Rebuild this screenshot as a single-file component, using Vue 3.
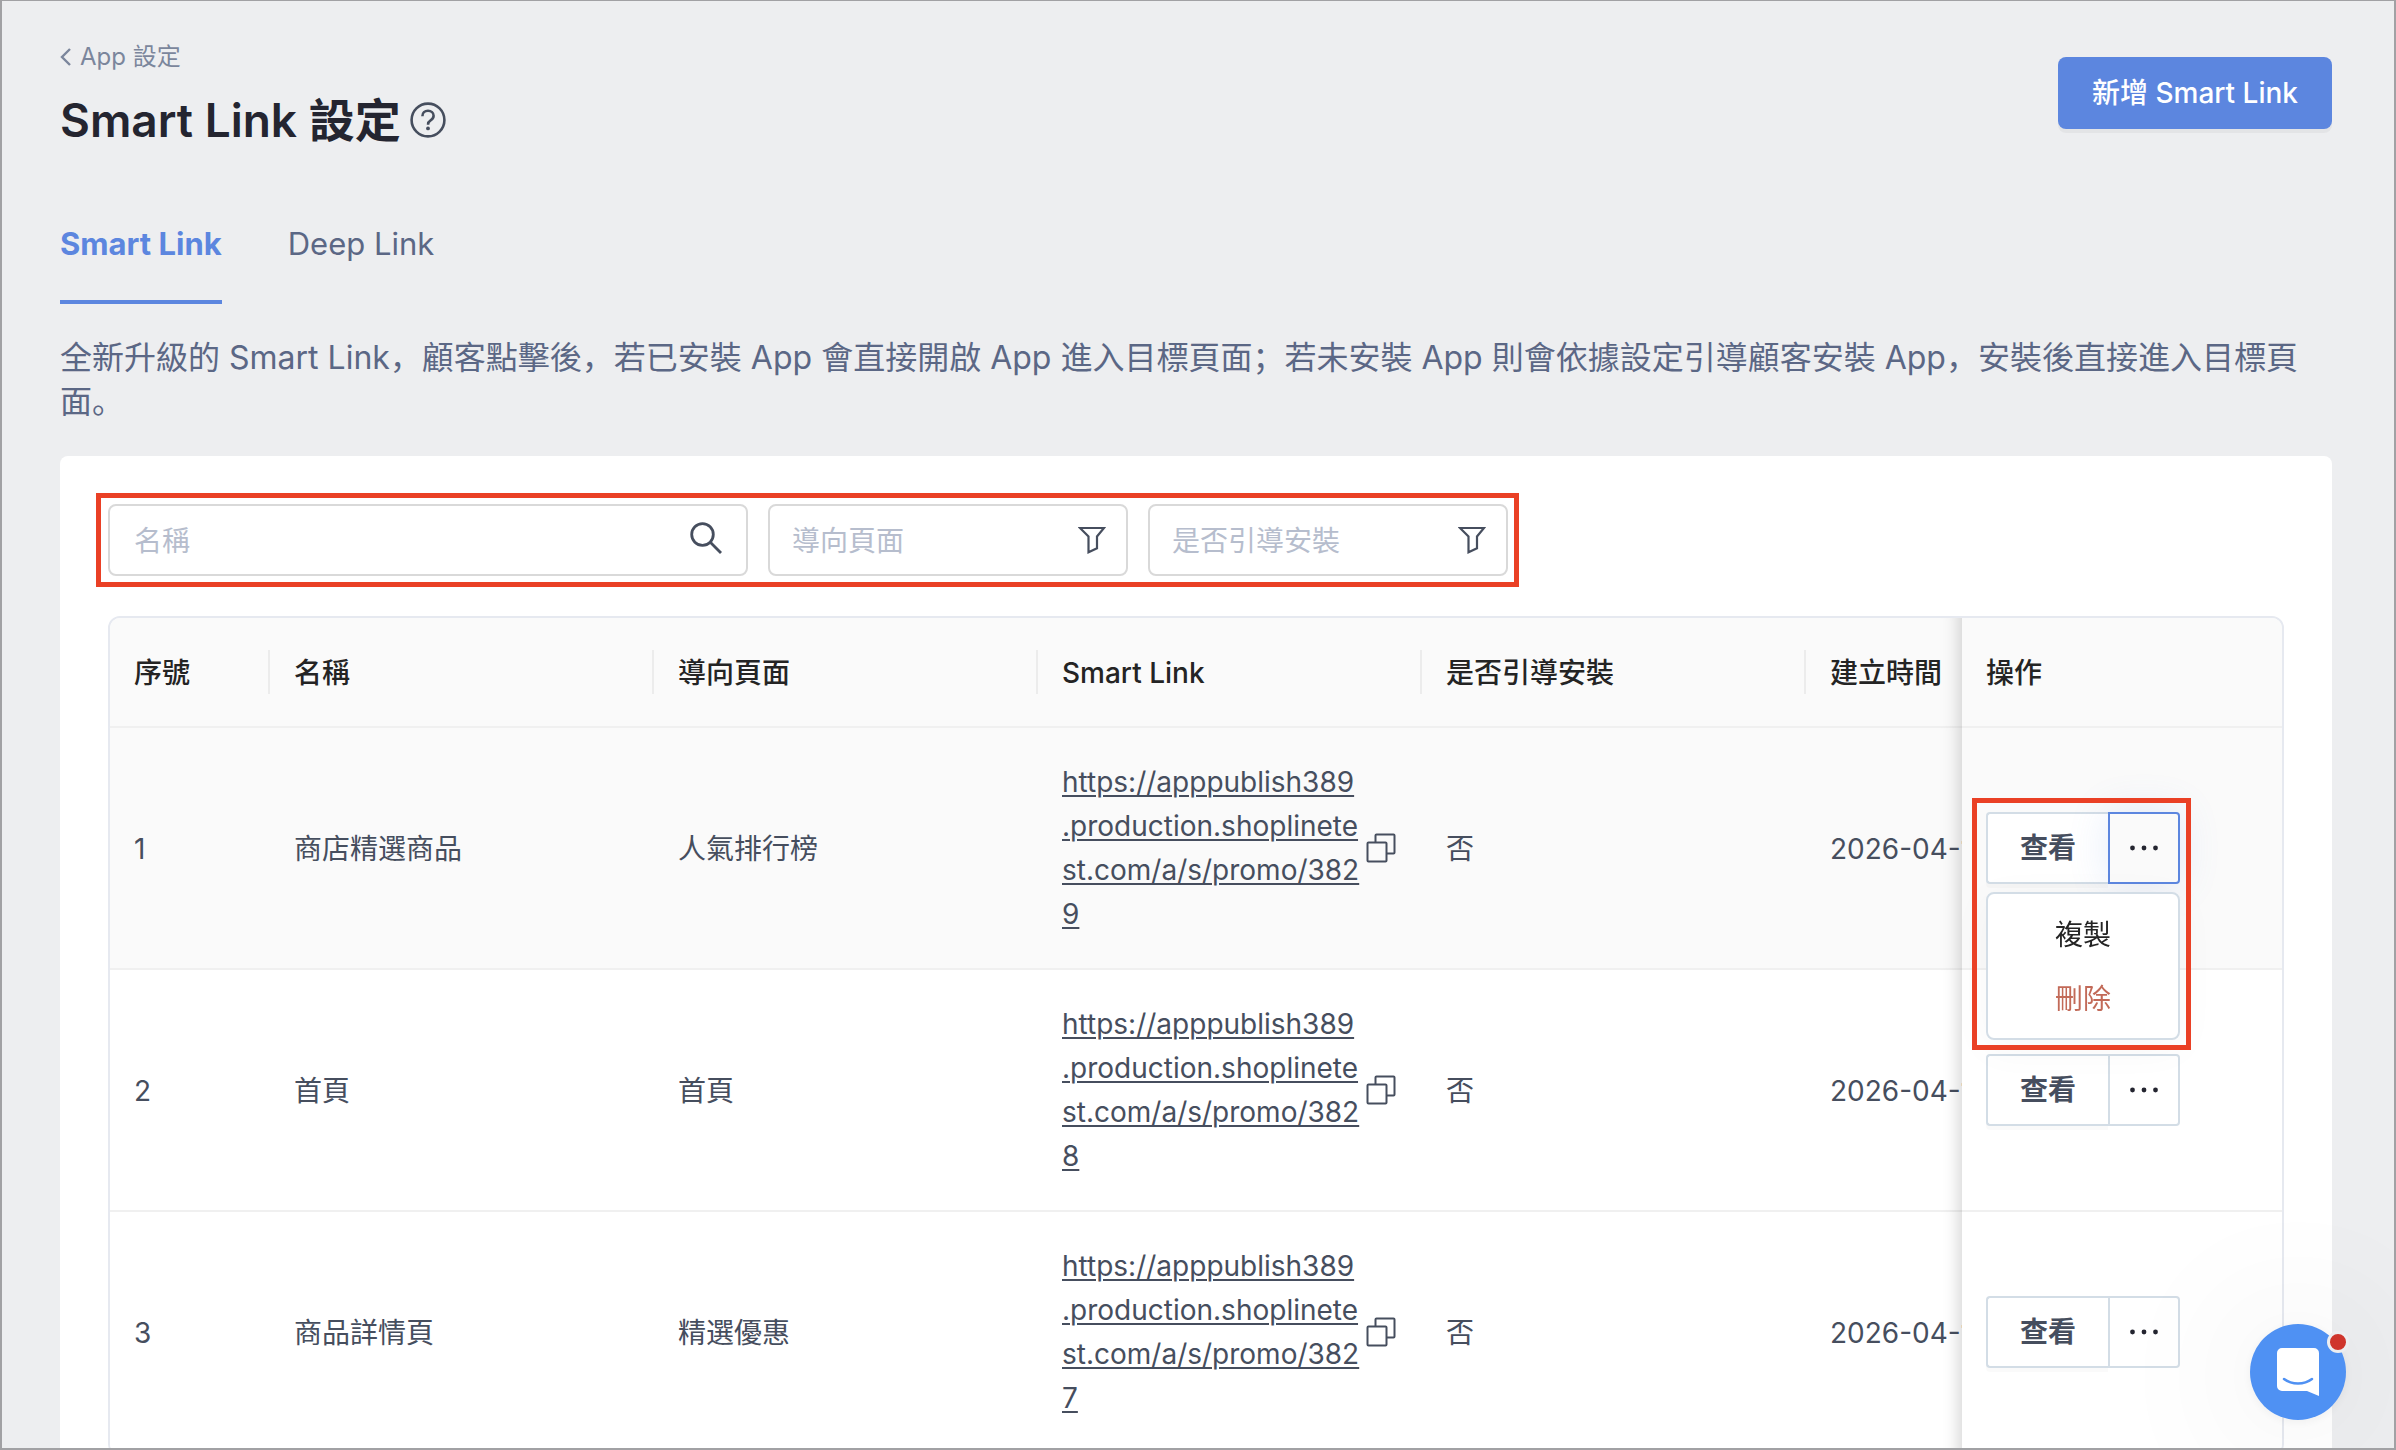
<script setup>
import { ref } from 'vue'

const tabs = ['Smart Link', 'Deep Link']
const activeTab = ref('Smart Link')
const keyword = ref('')
const openMenu = ref(1)

const columns = ['序號', '名稱', '導向頁面', 'Smart Link', '是否引導安裝', '建立時間']

const rows = [
  { id: 1, name: '商店精選商品', target: '人氣排行榜', code: '3829', guide: '否', created: '2026-04-10' },
  { id: 2, name: '首頁', target: '首頁', code: '3828', guide: '否', created: '2026-04-10' },
  { id: 3, name: '商品詳情頁', target: '精選優惠', code: '3827', guide: '否', created: '2026-04-10' },
]

const shop = 'https://apppublish389'
const pathOf = (row) => `.production.shoplinetest.com/a/s/promo/${row.code}`
const toggleMenu = (id) => {
  openMenu.value = openMenu.value === id ? null : id
}
</script>

<template>
  <div class="page">
    <header class="page-header">
      <div>
        <a class="breadcrumb" href="#">
          <svg width="12" height="20" viewBox="0 0 12 20" fill="none" stroke="currentColor" stroke-width="2.4">
            <path d="M10 2 2 10l8 8" />
          </svg>
          App 設定
        </a>
        <h1 class="title">
          Smart Link 設定
          <svg width="36" height="36" viewBox="0 0 36 36" fill="none" stroke="#464e5e" stroke-width="2.6">
            <circle cx="18" cy="18" r="16.4" />
            <path d="M12.4 14.2c0-3.2 2.4-5.4 5.6-5.4s5.6 2 5.6 5c0 2.2-1.3 3.5-3 4.5-1.9 1.2-2.5 2-2.5 4v.5" />
            <circle cx="18" cy="26.4" r="1.9" fill="#464e5e" stroke="none" />
          </svg>
        </h1>
      </div>
      <button class="primary" type="button">新增 Smart Link</button>
    </header>

    <nav class="tabs">
      <button
        v-for="tab in tabs"
        :key="tab"
        type="button"
        class="tab"
        :class="{ active: tab === activeTab }"
        @click="activeTab = tab"
      >{{ tab }}</button>
    </nav>

    <p class="intro">全新升級的 Smart Link，顧客點擊後，若已安裝 App 會直接開啟 App 進入目標頁面；若未安裝 App 則會依據設定引導顧客安裝 App，安裝後直接進入目標頁面。</p>

    <main class="card">
      <form class="filters" @submit.prevent>
        <div class="field search">
          <input v-model="keyword" type="text" placeholder="名稱" aria-label="名稱" />
          <svg class="field-icon" width="32" height="32" viewBox="0 0 32 32" fill="none" stroke="#464e5e" stroke-width="2.8">
            <circle cx="12.5" cy="12.5" r="10.8" />
            <path d="M20.3 20.3 31 31" />
          </svg>
        </div>
        <div v-for="label in ['導向頁面', '是否引導安裝']" :key="label" class="field">
          <select :aria-label="label">
            <option>{{ label }}</option>
          </select>
          <svg class="field-icon" width="28" height="28" viewBox="0 0 28 28" fill="none" stroke="#464e5e" stroke-width="2.2">
            <path d="M2 2h24l-7 8.5v11.8l-8.5 4V10.5z" />
          </svg>
        </div>
        <span class="callout filters-callout"></span>
      </form>

      <div class="table-wrap">
        <table>
          <colgroup>
            <col class="col-index" />
            <col v-for="n in 5" :key="n" class="col-data" />
            <col class="col-action" />
          </colgroup>
          <thead>
            <tr>
              <th v-for="name in columns" :key="name" scope="col">{{ name }}</th>
              <th class="fixed" scope="col">操作</th>
            </tr>
          </thead>
          <tbody>
            <tr v-for="row in rows" :key="row.id" :class="{ hovered: openMenu === row.id }">
              <td>{{ row.id }}</td>
              <td>{{ row.name }}</td>
              <td>{{ row.target }}</td>
              <td class="control">
                <div class="link-cell">
                  <a :href="shop + pathOf(row)">{{ shop }}<wbr />{{ pathOf(row) }}</a>
                  <button class="copy" type="button" aria-label="複製連結">
                    <svg width="30" height="30" viewBox="0 0 30 30" fill="none" stroke="currentColor" stroke-width="2">
                      <rect x="1.5" y="9.5" width="19" height="19" rx="1" />
                      <path d="M9.5 9.5v-7a1 1 0 0 1 1-1h17a1 1 0 0 1 1 1v17a1 1 0 0 1-1 1h-7" />
                    </svg>
                  </button>
                </div>
              </td>
              <td>{{ row.guide }}</td>
              <td>{{ row.created }}</td>
              <td class="control fixed" :class="{ open: openMenu === row.id }">
                <div class="actions">
                  <button class="view" type="button">查看</button>
                  <button
                    class="more"
                    :class="{ active: openMenu === row.id }"
                    type="button"
                    aria-label="更多"
                    @click="toggleMenu(row.id)"
                  >
                    <svg width="28" height="6" viewBox="0 0 28 6" fill="#242530">
                      <circle cx="2.5" cy="3" r="2.4" />
                      <circle cx="14" cy="3" r="2.4" />
                      <circle cx="25.5" cy="3" r="2.4" />
                    </svg>
                  </button>
                  <div v-if="openMenu === row.id" class="menu">
                    <button type="button">複製</button>
                    <button class="danger" type="button">刪除</button>
                  </div>
                  <span v-if="openMenu === row.id" class="callout menu-callout"></span>
                </div>
              </td>
            </tr>
          </tbody>
        </table>
      </div>
    </main>

    <button class="chat" type="button" aria-label="客服">
      <svg width="42" height="48" viewBox="0 0 42 48">
        <path d="M5 0h32a5 5 0 0 1 5 5v43l-12-5H5a5 5 0 0 1-5-5V5a5 5 0 0 1 5-5z" fill="#fff" />
        <path d="M7 31c8 6 20 6 28 0" fill="none" stroke="#4f91f3" stroke-width="2.6" stroke-linecap="round" />
      </svg>
      <span class="badge"></span>
    </button>
  </div>
</template>

<style>
body {
  margin: 0;
  background: #edeef0;
}
</style>

<style scoped>
.page {
  box-sizing: border-box;
  height: 100vh;
  overflow: hidden;
  padding: 39px 64px 0 60px;
  background: #edeef0;
  color: #464e5e;
  font-family: Inter, "Noto Sans CJK SC", sans-serif;
  font-size: 28px;
  line-height: 44px;
}

.page::after {
  content: "";
  position: fixed;
  inset: 0;
  z-index: 20;
  border: 2px solid #a1a1a4;
  border-top-width: 1px;
  pointer-events: none;
}

button,
input,
select {
  box-sizing: border-box;
  margin: 0;
  font: inherit;
  cursor: pointer;
}

.page-header {
  display: flex;
  justify-content: space-between;
  align-items: flex-start;
}

.breadcrumb {
  display: flex;
  align-items: center;
  gap: 8px;
  color: #7b869c;
  font-size: 24px;
  line-height: 36px;
  text-decoration: none;
}

.title {
  display: flex;
  align-items: center;
  gap: 9px;
  margin: 13px 0 0;
  color: #242530;
  font-size: 46px;
  font-weight: 600;
  line-height: 64px;
}

.primary {
  height: 72px;
  margin-top: 18px;
  padding: 0 34px;
  border: 0;
  border-radius: 8px;
  background: #5c86df;
  box-shadow: 0 4px 0 rgba(0, 0, 0, 0.04);
  color: #fff;
  font-weight: 500;
}

.tabs {
  display: flex;
  gap: 66px;
  margin-top: 68px;
}

.tab {
  padding: 0 0 32px;
  border: 0;
  border-bottom: 4px solid transparent;
  background: none;
  color: #5b6785;
  font-size: 31px;
  line-height: 48px;
}

.tab.active {
  border-color: #5c86df;
  color: #5c86df;
  font-weight: 700;
}

.intro {
  margin: 32px 0;
  color: #5b6785;
  font-size: 32px;
  line-height: 44px;
}

.card {
  padding: 48px;
  border-radius: 8px;
  background: #fff;
}

.filters {
  position: relative;
  display: flex;
  gap: 20px;
  width: fit-content;
}

.field {
  position: relative;
  width: 360px;
}

.field.search {
  width: 640px;
}

.field input,
.field select {
  display: block;
  width: 100%;
  height: 72px;
  padding: 2px 72px 0 24px;
  appearance: none;
  border: 2px solid #d9d9d9;
  border-radius: 8px;
  outline: none;
  background: #fff;
  color: #b6bdcd;
}

.field select {
  padding-left: 22px;
}

.field input::placeholder {
  color: #b6bdcd;
  opacity: 1;
}

.field-icon {
  position: absolute;
  top: 22px;
  right: 22px;
  pointer-events: none;
}

.search .field-icon {
  top: 18px;
  right: 26px;
}

.callout {
  position: absolute;
  border: 5px solid #ea4025;
  pointer-events: none;
}

.filters-callout {
  inset: -11px -11px -11px -12px;
}

.table-wrap {
  margin-top: 40px;
  overflow-x: auto;
  scrollbar-width: none;
  border: 2px solid #e6e9f0;
  border-radius: 12px;
}

table {
  width: 100%;
  min-width: 2400px;
  table-layout: fixed;
  border-collapse: separate;
  border-spacing: 0;
}

.col-index {
  width: 160px;
}

.col-data {
  width: 384px;
}

.col-action {
  width: 320px;
}

th,
td {
  position: relative;
  padding: 33px 24px 31px;
  border-bottom: 2px solid #f0f0f0;
  background: #fff;
  text-align: left;
}

.control {
  padding: 32px 24px;
}

th {
  background: #fafafa;
  color: #242424;
  font-weight: 500;
}

th:not(.fixed)::after {
  content: "";
  position: absolute;
  top: 32px;
  right: 0;
  width: 2px;
  height: 44px;
  background: #ececec;
}

.hovered td {
  background: #fafafa;
}

.fixed {
  position: sticky;
  right: 0;
  z-index: 2;
}

.fixed.open {
  z-index: 3;
}

.fixed::before {
  content: "";
  position: absolute;
  top: 0;
  bottom: -2px;
  left: -60px;
  width: 60px;
  box-shadow: inset -20px 0 16px -16px rgba(0, 0, 0, 0.16);
  pointer-events: none;
}

.link-cell {
  display: flex;
  align-items: center;
  gap: 5px;
}

.link-cell a {
  width: 299px;
  color: inherit;
  text-decoration-thickness: 2px;
  text-underline-offset: 3px;
  word-break: break-all;
}

.copy {
  display: flex;
  padding: 0;
  border: 0;
  background: none;
  color: inherit;
}

.actions {
  position: relative;
  display: flex;
  width: 194px;
}

.view {
  width: 122px;
  height: 72px;
  padding: 0;
  border: 2px solid #d3dde6;
  border-right: 0;
  border-radius: 4px 0 0 4px;
  background: #fff;
  box-shadow: 0 4px 0 rgba(0, 0, 0, 0.02);
  color: inherit;
  font-weight: 600;
}

.more {
  display: flex;
  align-items: center;
  justify-content: center;
  width: 72px;
  height: 72px;
  padding: 0;
  border: 2px solid #d3dde6;
  border-radius: 0 4px 4px 0;
  background: #fff;
}

.more.active {
  border-color: #5c86df;
  background: #fafafa;
  box-shadow: 0 0 40px rgba(92, 134, 223, 0.16);
}

.menu {
  position: absolute;
  top: 80px;
  right: 0;
  left: 0;
  padding: 9px 0 7px;
  border: 2px solid #d3dde6;
  border-radius: 8px;
  background: #fff;
  box-shadow: 0 8px 40px rgba(0, 0, 0, 0.04);
}

.menu button {
  display: block;
  width: 100%;
  height: 64px;
  padding: 0;
  border: 0;
  background: none;
  color: #242424;
}

.menu .danger {
  color: #c26a58;
}

.menu-callout {
  inset: -14px -11px -166px -14px;
}

.chat {
  position: fixed;
  right: 50px;
  bottom: 30px;
  z-index: 10;
  display: flex;
  align-items: center;
  justify-content: center;
  width: 96px;
  height: 96px;
  padding: 0;
  border: 0;
  border-radius: 50%;
  background: #4f91f3;
  box-shadow: 0 2px 12px rgba(0, 0, 0, 0.06), 0 4px 160px rgba(0, 0, 0, 0.12);
}

.badge {
  position: absolute;
  top: 7px;
  right: -3px;
  width: 16px;
  height: 16px;
  border: 3px solid #edeef0;
  border-radius: 50%;
  background: #cf352c;
}
</style>
